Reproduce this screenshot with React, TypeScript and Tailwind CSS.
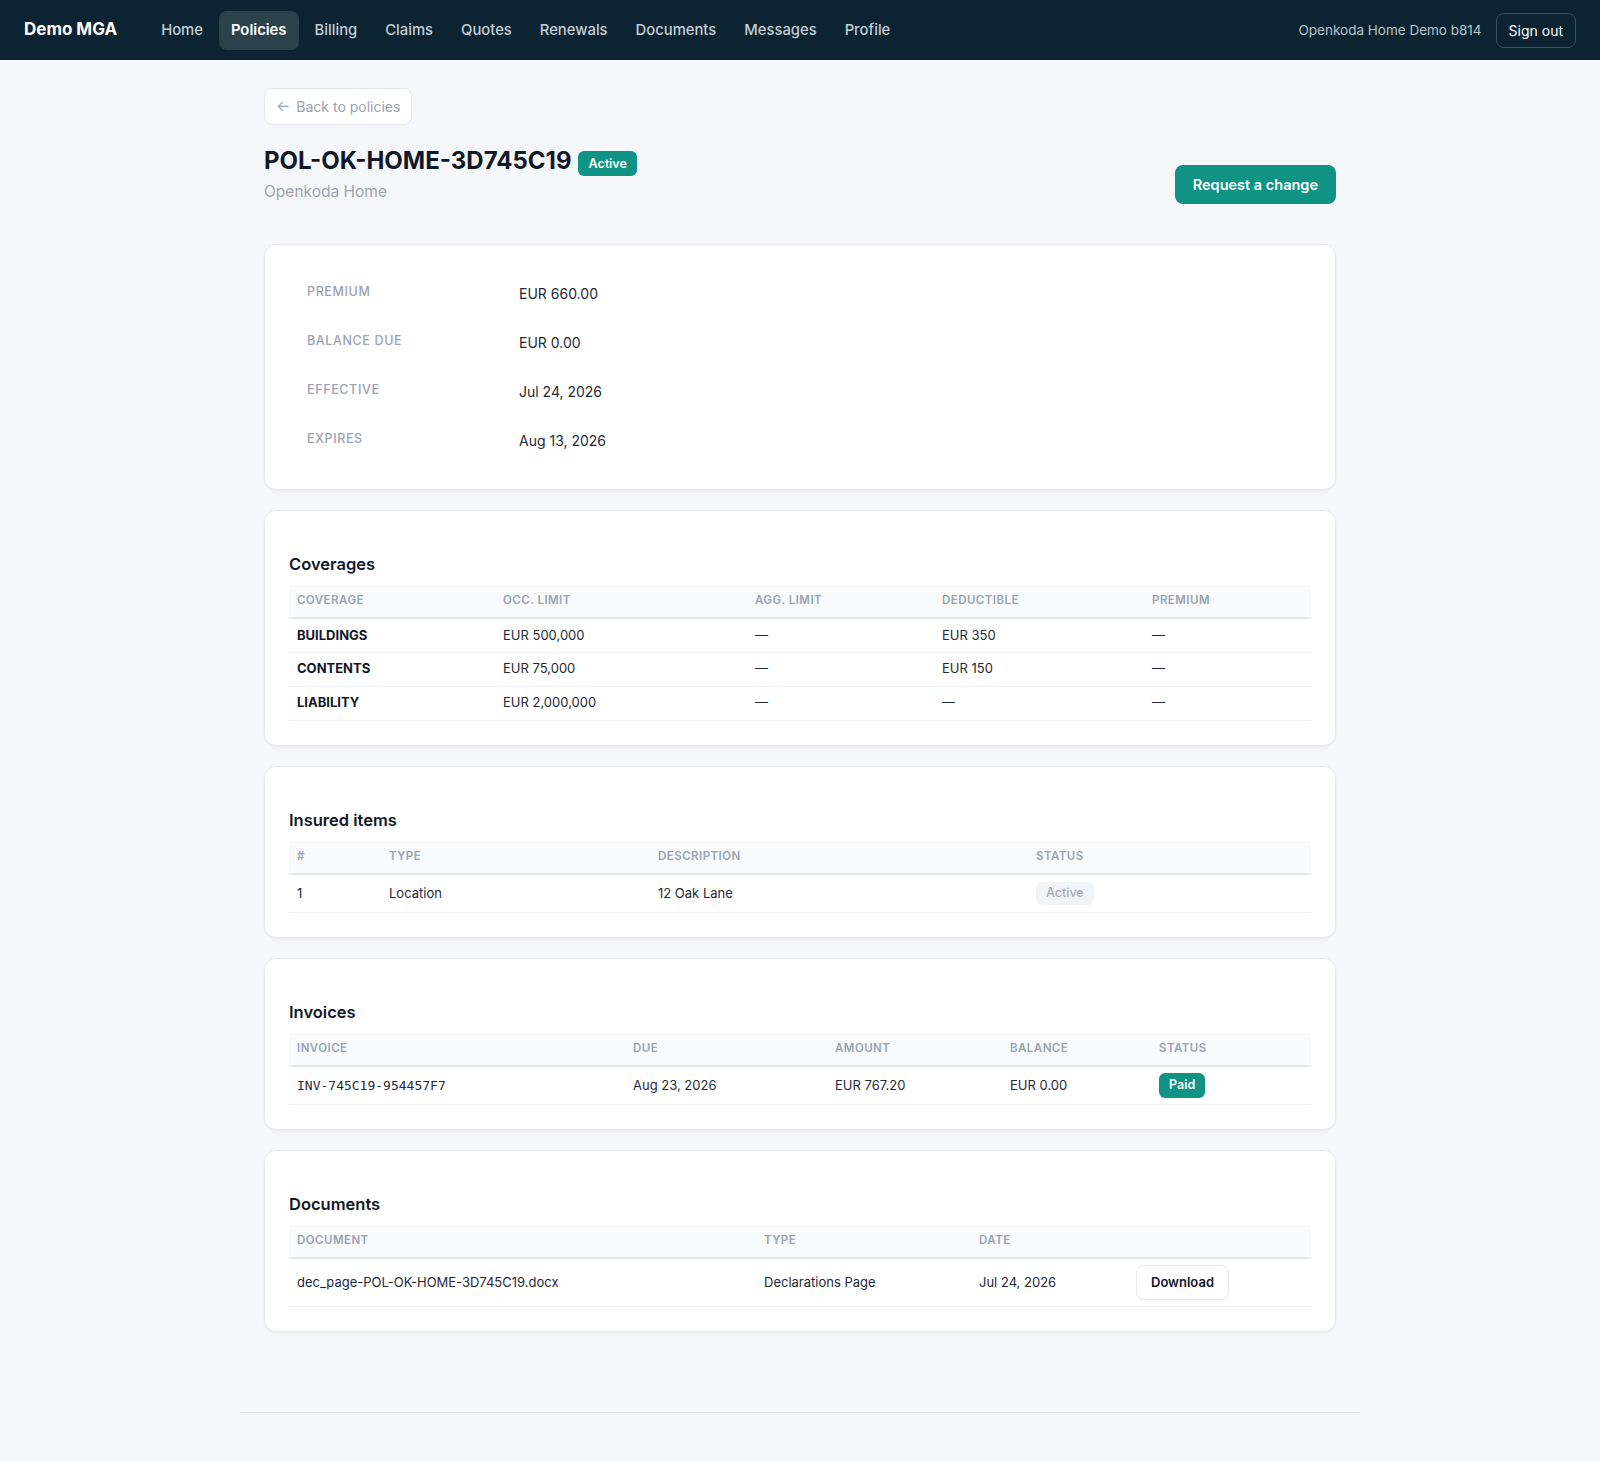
import React from 'react';

const navLinks = ['Home', 'Policies', 'Billing', 'Claims', 'Quotes', 'Renewals', 'Documents', 'Messages', 'Profile'];

type Col = { label: string; width?: string };

function Badge({ children, tone }: { children: React.ReactNode; tone: 'teal' | 'gray' }) {
  return (
    <span
      className={
        tone === 'teal'
          ? 'inline-flex h-[25px] items-center rounded-md bg-[#0e9384] px-[10px] text-[12.5px] font-semibold text-white'
          : 'inline-flex h-[23px] items-center rounded-md bg-[#f1f4f7] px-[10px] text-[12.5px] font-medium text-[#a5acb6]'
      }
    >
      {children}
    </span>
  );
}

function SectionCard({ title, cols, children }: { title: string; cols: Col[]; children: React.ReactNode }) {
  return (
    <section className="rounded-xl border border-[#e6e8ec] bg-white px-6 pt-6 pb-6 shadow-[0_1px_2px_rgba(16,24,40,0.05)]">
      <h2 className="mt-[18px] mb-[10px] text-[16.5px] leading-[22px] font-semibold text-[#111827]">{title}</h2>
      <table className="w-full table-fixed border-collapse">
        <colgroup>
          {cols.map((c, i) => (
            <col key={i} style={c.width ? { width: c.width } : undefined} />
          ))}
        </colgroup>
        <thead>
          <tr className="h-[33px] border-b-2 border-[#e5e7eb] bg-[#f8fafc]">
            {cols.map((c, i) => (
              <th key={i} className="px-2 text-left text-[11.5px] font-semibold tracking-[0.04em] text-[#9ca3af] uppercase">
                {c.label}
              </th>
            ))}
          </tr>
        </thead>
        <tbody>{children}</tbody>
      </table>
    </section>
  );
}

const td = 'px-2 text-[13px] text-[#1f2937]';

export default function App() {
  return (
    <div className="min-h-screen bg-[#f6f7fa] font-['Inter','Noto_Sans',sans-serif]">
      {/* Top bar */}
      <header className="flex h-[60px] items-center bg-[#0c2431] pr-6 pl-6">
        <span className="mr-[32px] text-[17px] font-bold text-white">Demo MGA</span>
        <nav className="flex items-center gap-1">
          {navLinks.map((l) => (
            <a
              key={l}
              className={
                l === 'Policies'
                  ? 'rounded-lg bg-[#2b414c] px-3 py-[9px] text-[14.8px] leading-[21px] font-semibold text-white'
                  : 'px-3 py-[9px] text-[14.8px] leading-[21px] font-medium text-[#c5ced6]'
              }
            >
              {l}
            </a>
          ))}
        </nav>
        <div className="ml-auto flex items-center gap-[14px]">
          <span className="text-[13.5px] text-[#b8c3cc]">Openkoda Home Demo b814</span>
          <button className="h-[35px] rounded-lg border border-[#3a505c] px-[12px] text-[14px] text-white">Sign out</button>
        </div>
      </header>

      <main className="mx-auto max-w-[1120px] px-6 pt-7 pb-20">
        <button className="flex h-[37px] items-center gap-[6px] rounded-lg border border-[#e5e7eb] bg-white px-[11px] text-[14px] text-[#9ca3af]">
          <span className="text-[15px]">←</span>
          Back to policies
        </button>

        <div className="mt-5 flex items-end justify-between">
          <div>
            <div className="flex items-center gap-[7px]">
              <h1 className="text-[24px] leading-[32px] font-bold text-[#111827]">POL-OK-HOME-3D745C19</h1>
              <span className="mt-[4px]">
                <Badge tone="teal">Active</Badge>
              </span>
            </div>
            <p className="mt-[3px] text-[15.5px] leading-[24px] text-[#9ca3af]">Openkoda Home</p>
          </div>
          <button className="h-[39px] rounded-lg bg-[#0e9384] px-[18px] text-[14.5px] font-semibold text-white">
            Request a change
          </button>
        </div>

        {/* Summary */}
        <section className="mt-10 rounded-xl border border-[#e6e8ec] bg-white px-[42px] py-6 shadow-[0_1px_2px_rgba(16,24,40,0.05)]">
          {[
            ['Premium', 'EUR 660.00'],
            ['Balance due', 'EUR 0.00'],
            ['Effective', 'Jul 24, 2026'],
            ['Expires', 'Aug 13, 2026'],
          ].map(([k, v]) => (
            <div key={k} className="flex h-[49px] items-center">
              <span className="mb-[2px] w-[212px] text-[12.5px] font-medium tracking-[0.05em] text-[#9ca3af] uppercase">{k}</span>
              <span className="text-[14px] text-[#1f2937]">{v}</span>
            </div>
          ))}
        </section>

        <div className="mt-5 flex flex-col gap-5">
          <SectionCard
            title="Coverages"
            cols={[
              { label: 'Coverage', width: '206px' },
              { label: 'Occ. limit', width: '252px' },
              { label: 'Agg. limit', width: '187px' },
              { label: 'Deductible', width: '210px' },
              { label: 'Premium' },
            ]}
          >
            {[
              ['Buildings', 'EUR 500,000', '—', 'EUR 350', '—'],
              ['Contents', 'EUR 75,000', '—', 'EUR 150', '—'],
              ['Liability', 'EUR 2,000,000', '—', '—', '—'],
            ].map((r) => (
              <tr key={r[0]} className="h-[34px] border-b border-[#eef0f3]">
                <td className="px-2 text-[13px] font-bold text-[#111827] uppercase">{r[0]}</td>
                <td className={td}>{r[1]}</td>
                <td className={td}>{r[2]}</td>
                <td className={td}>{r[3]}</td>
                <td className={td}>{r[4]}</td>
              </tr>
            ))}
          </SectionCard>

          <SectionCard
            title="Insured items"
            cols={[
              { label: '#', width: '92px' },
              { label: 'Type', width: '269px' },
              { label: 'Description', width: '378px' },
              { label: 'Status' },
            ]}
          >
            <tr className="h-[39px] border-b border-[#eef0f3]">
              <td className={td}>1</td>
              <td className={td}>Location</td>
              <td className={td}>12 Oak Lane</td>
              <td className={td}>
                <Badge tone="gray">Active</Badge>
              </td>
            </tr>
          </SectionCard>

          <SectionCard
            title="Invoices"
            cols={[
              { label: 'Invoice', width: '336px' },
              { label: 'Due', width: '202px' },
              { label: 'Amount', width: '175px' },
              { label: 'Balance', width: '149px' },
              { label: 'Status' },
            ]}
          >
            <tr className="h-[38px] border-b border-[#eef0f3]">
              <td className="px-2 font-['DejaVu_Sans_Mono','Liberation_Mono',monospace] text-[13px] text-[#1f2937]">
                INV-745C19-954457F7
              </td>
              <td className={td}>Aug 23, 2026</td>
              <td className={td}>EUR 767.20</td>
              <td className={td}>EUR 0.00</td>
              <td className={td}>
                <Badge tone="teal">Paid</Badge>
              </td>
            </tr>
          </SectionCard>

          <SectionCard
            title="Documents"
            cols={[
              { label: 'Document', width: '467px' },
              { label: 'Type', width: '215px' },
              { label: 'Date', width: '157px' },
              { label: '' },
            ]}
          >
            <tr className="h-[49px] border-b border-[#eef0f3]">
              <td className={td}>dec_page-POL-OK-HOME-3D745C19.docx</td>
              <td className={td}>Declarations Page</td>
              <td className={td}>Jul 24, 2026</td>
              <td className={td}>
                <button className="h-[35px] rounded-lg border border-[#e5e7eb] bg-white px-[14px] text-[13px] font-semibold text-[#111827]">
                  Download
                </button>
              </td>
            </tr>
          </SectionCard>
        </div>
      </main>

      <footer className="mx-auto h-[49px] max-w-[1120px] border-t border-[#dfe3e8]" />
    </div>
  );
}
